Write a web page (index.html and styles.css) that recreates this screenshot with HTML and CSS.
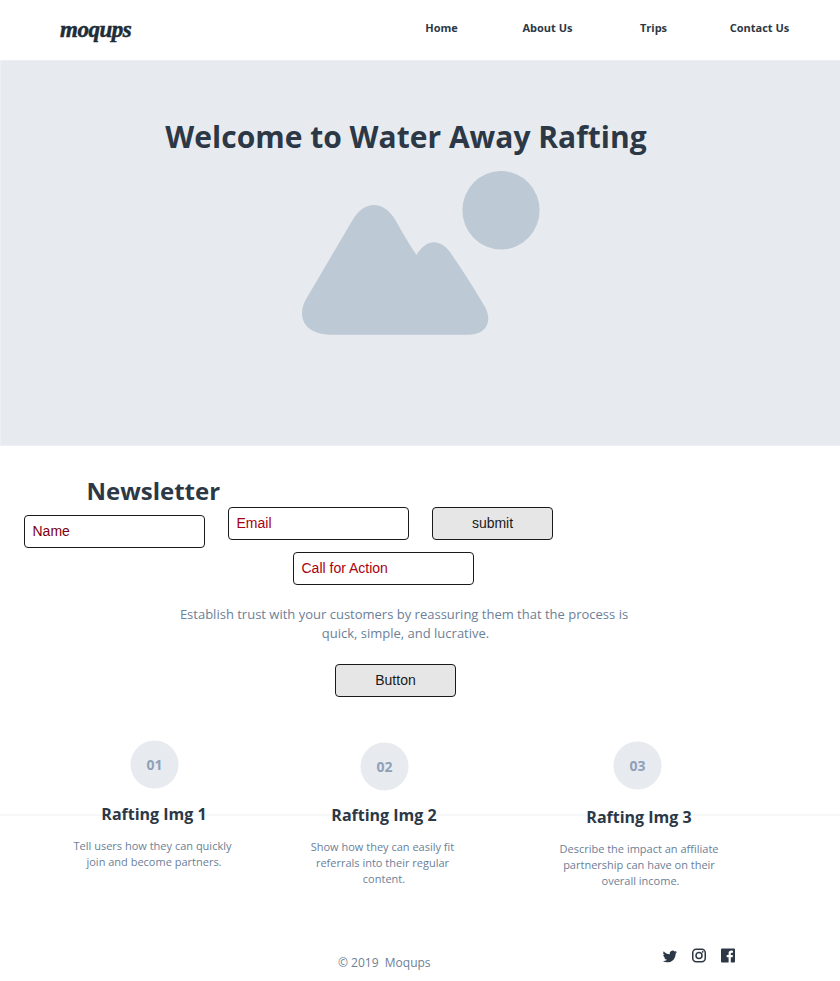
FILE: index.html
```html
<!DOCTYPE html>
<html lang="en">
<head>
<meta charset="utf-8">
<title>Water Away Rafting</title>
<link rel="stylesheet" href="styles.css">
</head>
<body>
<header class="header">
  <a class="logo">moqups</a>
  <nav class="nav"><a>Home</a><a>About Us</a><a>Trips</a><a>Contact Us</a></nav>
</header>
<main>
  <section class="hero">
    <h1>Welcome to Water Away Rafting</h1>
    <svg class="landscape" width="240" height="166" viewBox="0 0 240 166">
      <path d="M5 131 L52 51 C64 29.500 84 29.500 96 51 Q107 71 116.500 85 C126 68.500 140 68.500 150 82 Q170 111 185 137 C193 152 186 164.700 168 164.700 H30 C5 164 -3 148 5 131Z"/>
      <ellipse cx="201" cy="40.300" rx="38.600" ry="39.200"/>
    </svg>
  </section>
  <section class="newsletter">
    <h2>Newsletter</h2>
    <form class="fields">
      <input class="field name" type="text" value="Name">
      <input class="field" type="text" value="Email">
      <button class="button" type="button">submit</button>
    </form>
    <input class="field action" type="text" value="Call for Action">
    <p class="intro">Establish trust with your customers by reassuring them that the process is <span class="second">quick, simple, and lucrative.</span></p>
    <button class="button main-button" type="button">Button</button>
  </section>
  <section class="features">
    <article class="feature first">
      <div class="number">01</div>
      <h3>Rafting Img 1</h3>
      <p>Tell users how they can quickly <span class="closing">join and become partners.</span></p>
    </article>
    <article class="feature middle">
      <div class="number">02</div>
      <h3>Rafting Img 2</h3>
      <p>Show how they can easily fit<br>referrals into their regular <span class="closing">content.</span></p>
    </article>
    <article class="feature last">
      <div class="number">03</div>
      <h3>Rafting Img 3</h3>
      <p>Describe the impact an affiliate<br>partnership can have on their <span class="closing">overall income.</span></p>
    </article>
  </section>
</main>
<footer class="footer">
  <p>© 2019&nbsp; Moqups</p>
  <div class="social">
    <svg width="16" height="16" viewBox="0 0 24 24"><path d="M22.500 5.900c-.8.400-1.600.6-2.500.7.900-.5 1.500-1.400 1.900-2.400-.9.500-1.800.9-2.800 1.100a4.400 4.400 0 0 0-7.500 4C8 9.100 4.700 7.400 2.600 4.700a4.400 4.400 0 0 0 1.300 5.900c-.7 0-1.400-.2-2-.6 0 2.200 1.500 4.100 3.600 4.500-.7.200-1.300.2-2 .1.600 1.700 2.200 3 4.100 3.100a8.900 8.900 0 0 1-6.500 1.800 12.500 12.500 0 0 0 6.800 2c8.200 0 12.700-6.800 12.500-13 .8-.7 1.600-1.500 2.100-2.600z"/></svg>
    <svg width="16" height="16" viewBox="0 0 16 16"><rect class="line" x="1.750" y="1.250" width="12.500" height="12.500" rx="3.500"/><circle class="line" cx="8" cy="7.500" r="3"/><circle cx="11.700" cy="3.800" r=".9"/></svg>
    <svg width="16" height="16" viewBox="0 .5 16 16"><path d="M2 1h12q1 0 1 1v12q0 1-1 1h-3.200V9.700h1.800l.3-2.200h-2.100V6.200q0-1 1.100-1h1.100v-2q-.7-.1-1.600-.1-2.800 0-2.800 2.700v1.700H6.700v2.200h1.900V15H2q-1 0-1-1V2q0-1 1-1z"/></svg>
  </div>
</footer>
</body>
</html>
```

FILE: styles.css
```css
* { box-sizing: border-box; }
body { margin: 0; background: #fff; color: #2c3845; font-family: "Open Sans", sans-serif; }
h1, h2, h3, p { margin: 0; }
.header { height: 60px; display: flex; justify-content: space-between; padding: 0 27.5px 0 60px; }
.logo { font: italic bold 23px/28px "Liberation Serif", serif; letter-spacing: -.5px; color: #202c37; padding-top: 16px; -webkit-text-stroke: .5px #202c37; }
.nav { display: grid; grid-template-columns: repeat(4, 106px); padding-top: 20px; font-size: 11px; line-height: 16px; font-weight: 700; text-align: center; }
.hero { height: 386px; background: #e7ebf0; border: 1px solid #eceff3; border-right: 0; padding-top: 55px; }
.hero h1 { width: 810px; text-align: center; font-size: 30px; line-height: 42px; }
.landscape { display: block; margin: 12px 0 0 299px; fill: #bdc9d5; }
.newsletter { height: 294px; padding-top: 28px; }
.newsletter h2 { margin-left: 86.5px; font-size: 24px; line-height: 33px; }
.fields { display: flex; gap: 23px; align-items: flex-start; margin-left: 24px; height: 45px; }
.field, .button { display: block; height: 33px; border: 1px solid #1a1a1a; border-radius: 4px; font: 14px/20px "Liberation Sans", sans-serif; }
.field { width: 181px; padding: 0 7px 2px 7.5px; background: #fff; color: #a90011; }
.name { margin-top: 8px; color: #7b0010; }
.button { width: 121px; background: #e6e6e6; color: #1a1a1a; padding: 0 0 2px; }
.action { margin-left: 293px; }
.intro { width: 808px; margin-top: 20px; text-align: center; font-size: 13px; line-height: 19px; color: #6c8097; }
.second { display: block; padding-left: 3px; }
.main-button { margin: 21px 0 0 335px; }
.features { position: relative; display: flex; height: 200px; text-align: center; }
.features::before { content: ""; position: absolute; z-index: -1; left: 0; right: 0; top: 74px; height: 2px; background: #f5f7f9; }
.feature { width: 230px; }
.feature p { font-size: 11px; line-height: 16px; color: #6c8097; }
.closing { display: block; padding-left: 3px; }
.number { width: 49px; height: 49px; margin: 0 auto; border: .5px solid transparent; border-radius: 50%; background: radial-gradient(circle at 50% 50%, #e7ebf0 23.6px, transparent 24.4px) border-box; color: #8fa1b7; font-size: 14px; line-height: 48px; font-weight: 700; }
.feature h3 { font-size: 16px; line-height: 22px; }
.first { margin-left: 39.5px; }
.first h3 { margin: 14px 1px 0 0; }
.first p { margin: 13px 4px 0 0; }
.middle { padding-top: 2px; }
.middle h3 { margin: 13px 1px 0 0; }
.middle p { margin: 13px 4px 0 0; }
.last { margin-left: 23px; padding-top: 1px; }
.last h3 { margin: 16px 0 0 3px; }
.last p { margin: 13px 0 0 3px; }
.footer { display: flex; align-items: flex-start; padding-top: 8px; }
.footer p { margin: 6px 231.5px 0 338px; font-size: 12px; line-height: 17px; color: #6c8097; white-space: nowrap; }
.social { display: flex; gap: 13px; fill: #2c3845; }
.line { fill: none; stroke: #2c3845; stroke-width: 1.5; }
```
